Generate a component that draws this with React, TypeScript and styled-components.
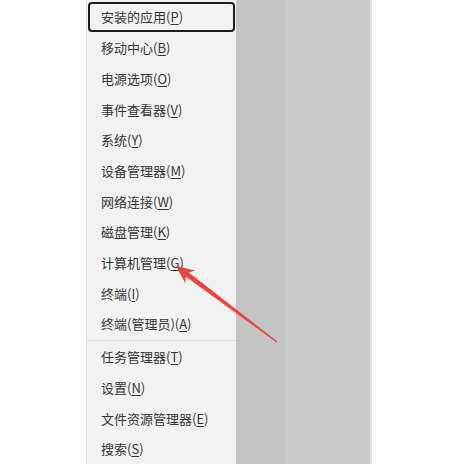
import React from "react";
import styled, { createGlobalStyle } from "styled-components";

const GlobalStyle = createGlobalStyle`
  html, body {
    margin: 0;
    padding: 0;
    background: #fff;
  }
`;

const Page = styled.div`
  position: relative;
  width: 456px;
  height: 464px;
  display: flex;
  overflow: hidden;
  background: #fff;
`;

const Gutter = styled.div`
  width: 86px;
  flex-shrink: 0;
`;

const Menu = styled.div`
  width: 150px;
  flex-shrink: 0;
  box-sizing: border-box;
  background: #f2f2f2;
  border-left: 1px solid #dedede;
  padding-top: 1.6px;
  display: flex;
  flex-direction: column;
`;

const Item = styled.div<{ $focused?: boolean }>`
  height: 30.7px;
  box-sizing: border-box;
  margin: 0 1.5px 0 1px;
  padding-left: 11px;
  display: flex;
  align-items: center;
  border: 2px solid ${(p) => (p.$focused ? "#1c1c1c" : "transparent")};
  border-radius: 4px;
  font-family: "Noto Sans CJK SC", "Noto Sans", sans-serif;
  font-size: 13px;
  color: #353535;
  white-space: nowrap;
`;

const Key = styled.span`
  text-decoration: underline;
  text-underline-offset: 2px;
  text-decoration-thickness: 1px;
`;

const Separator = styled.div`
  height: 1px;
  margin: 0.6px 0 0.6px;
  background: #e0e0e0;
`;

const Shade = styled.div<{ $tone: string; $w: number }>`
  width: ${(p) => p.$w}px;
  flex-shrink: 0;
  background: ${(p) => p.$tone};
`;

const Edge = styled.div`
  width: 2px;
  flex-shrink: 0;
  background: #e4e4e4;
`;

const Rest = styled.div`
  flex: 1;
  background: #fff;
`;

const Arrow = styled.svg`
  position: absolute;
  left: 0;
  top: 0;
  width: 456px;
  height: 464px;
  pointer-events: none;
`;

type Entry = { label: string; key: string; focused?: boolean } | "sep";

const entries: Entry[] = [
  { label: "安装的应用", key: "P", focused: true },
  { label: "移动中心", key: "B" },
  { label: "电源选项", key: "O" },
  { label: "事件查看器", key: "V" },
  { label: "系统", key: "Y" },
  { label: "设备管理器", key: "M" },
  { label: "网络连接", key: "W" },
  { label: "磁盘管理", key: "K" },
  { label: "计算机管理", key: "G" },
  { label: "终端", key: "I" },
  { label: "终端(管理员)", key: "A" },
  "sep",
  { label: "任务管理器", key: "T" },
  { label: "设置", key: "N" },
  { label: "文件资源管理器", key: "E" },
  { label: "搜索", key: "S" },
];

export default function App() {
  return (
    <>
      <GlobalStyle />
      <Page>
        <Gutter />
        <Menu>
          {entries.map((e, i) =>
            e === "sep" ? (
              <Separator key={i} />
            ) : (
              <Item key={i} $focused={e.focused}>
                {e.label}(<Key>{e.key}</Key>)
              </Item>
            )
          )}
        </Menu>
        <Shade $tone="#c4c4c4" $w={50} />
        <Shade $tone="#cbcbcb" $w={84} />
        <Edge />
        <Rest />
        <Arrow viewBox="0 0 456 464">
          <polygon
            points="176,266 195.5,270.5 188.8,272.6 277.4,341.4 276.6,342.6 185.6,276.6 185.5,283.5"
            fill="#e8453c"
          />
        </Arrow>
      </Page>
    </>
  );
}
